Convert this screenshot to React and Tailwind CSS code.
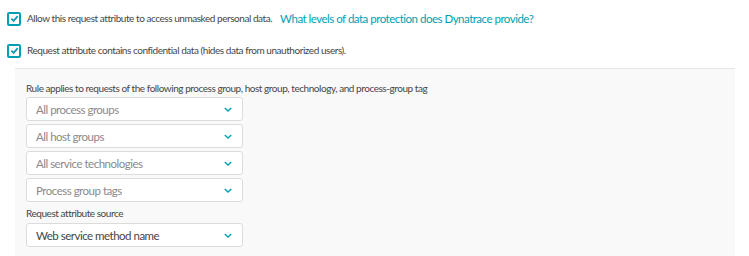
import React from 'react';

const font = { fontFamily: 'Lato, "Open Sans", sans-serif' };

const Check = () => (
  <span className="flex h-[14px] w-[14px] shrink-0 items-center justify-center rounded-[2px] border-2 border-[#00a1b2] bg-white">
    <svg viewBox="0 0 10 10" className="h-[9px] w-[9px]">
      <path d="M1.5 5.2 L4 7.6 L8.6 2.4" fill="none" stroke="#00a1b2" strokeWidth="2" />
    </svg>
  </span>
);

const Select = ({ label, muted = true }) => (
  <div className="flex h-[24px] w-[217px] items-center justify-between rounded-[3px] border border-[#dcdcdc] bg-white pl-[9px] pr-[10px]">
    <span className={`text-[11.5px] tracking-[-0.5px] ${muted ? 'text-[#8a8a8a]' : 'text-[#454646]'}`}>{label}</span>
    <svg viewBox="0 0 10 6" className="h-[5px] w-[8px]">
      <path d="M1 1 L5 4.8 L9 1" fill="none" stroke="#00a1b2" strokeWidth="1.8" />
    </svg>
  </div>
);

export default function App() {
  return (
    <div className="h-[256px] w-[749px] overflow-hidden bg-white text-[#454646]" style={font}>
      <div className="flex items-center gap-[6px] pl-[7px] pt-[10px]">
        <Check />
        <span className="text-[10px] tracking-[-0.45px]">Allow this request attribute to access unmasked personal data.</span>
        <a className="ml-[2px] text-[11.5px] tracking-[-0.5px] text-[#00a1b2]">What levels of data protection does Dynatrace provide?</a>
      </div>
      <div className="mt-[16px] flex items-center gap-[6px] pl-[7px]">
        <Check />
        <span className="text-[10px] tracking-[-0.45px]">Request attribute contains confidential data (hides data from unauthorized users).</span>
      </div>
      <div className="ml-[15px] mt-[10px] w-[720px] border-t border-[#e6e6e6] bg-[#f9f9f9] pb-[20px] pl-[11px] pt-[12px]">
        <div className="text-[10px] leading-[14px] tracking-[-0.45px]">
          Rule applies to requests of the following process group, host group, technology, and process-group tag
        </div>
        <div className="mt-[2px] flex flex-col gap-[3px]">
          <Select label="All process groups" />
          <Select label="All host groups" />
          <Select label="All service technologies" />
          <Select label="Process group tags" />
        </div>
        <div className="mt-[4px] text-[10px] leading-[14px] tracking-[-0.45px]">Request attribute source</div>
        <div className="mt-[3px]">
          <Select label="Web service method name" muted={false} />
        </div>
      </div>
    </div>
  );
}
